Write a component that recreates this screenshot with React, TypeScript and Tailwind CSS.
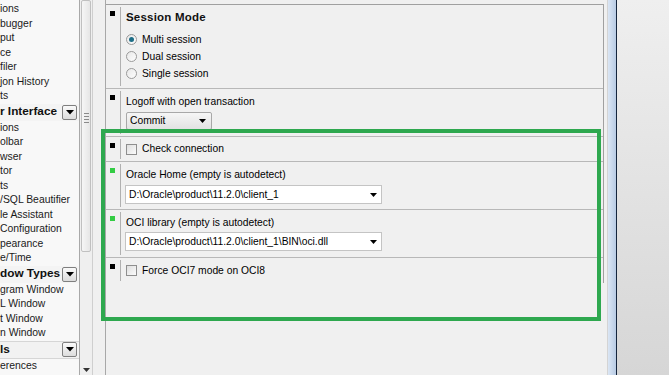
import React from "react";

const DropBtn = () => (
  <div className="w-[15px] h-[15px] border border-[#7f7f7f] rounded-[2px] bg-gradient-to-b from-[#fafafa] to-[#dcdcdc] flex items-center justify-center">
    <svg width="8" height="5" viewBox="0 0 8 5">
      <path d="M0 0 L8 0 L4 4.5 Z" fill="#000" />
    </svg>
  </div>
);

const Item = ({ t }: { t: string }) => (
  <div className="h-[14.5px] leading-[14.5px] whitespace-nowrap text-[10.4px] text-[#1a1a1a]">{t}</div>
);

const Header = ({ t, boxed }: { t: string; boxed?: boolean }) => (
  <div
    className={
      boxed
        ? "h-[18px] flex items-center justify-between pr-[2px] border-y border-[#d6d6d6] bg-[#f2f2f2]"
        : "h-[17px] flex items-center justify-between pr-[2px] bg-[#f4f4f4]"
    }
  >
    <span className="font-bold text-[11.8px] text-[#111] whitespace-nowrap">{t}</span>
    <DropBtn />
  </div>
);

const Sidebar = () => (
  <div className="w-[80px] h-full bg-[#f8f8f8] border-r border-[#a8a8a8] pt-[2px] overflow-hidden">
    {["ions", "bugger", "put", "ce", "filer", "jon History", "ts"].map((t) => (
      <Item key={t} t={t} />
    ))}
    <Header t="r Interface" />
    {["ions", "olbar", "wser", "tor", "ts", "/SQL Beautifier", "le Assistant", "Configuration", "pearance", "e/Time"].map((t) => (
      <Item key={t} t={t} />
    ))}
    <Header t="dow Types" />
    {["gram Window", "L Window", "t Window", "n Window"].map((t) => (
      <Item key={t} t={t} />
    ))}
    <Header t="ls" boxed />
    <Item t="erences" />
  </div>
);

const Scrollbar = () => (
  <div className="w-[13px] h-full bg-[#efefef] border-r border-[#cfcfcf] flex flex-col">
    <div className="h-[252px] mx-[1px] border border-[#c0c0c0] rounded-[2px] bg-gradient-to-r from-[#f6f6f6] to-[#e6e6e6] flex flex-col items-center pt-[112px] gap-[2px]">
      <div className="w-[5px] h-px bg-[#8a8a8a]" />
      <div className="w-[5px] h-px bg-[#8a8a8a]" />
      <div className="w-[5px] h-px bg-[#8a8a8a]" />
      <div className="w-[5px] h-px bg-[#8a8a8a]" />
    </div>
    <div className="flex-1" />
    <div className="h-[10px] flex items-center justify-center">
      <svg width="7" height="4" viewBox="0 0 7 4">
        <path d="M0 0 L7 0 L3.5 4 Z" fill="#333" />
      </svg>
    </div>
  </div>
);

const Marker = ({ green }: { green?: boolean }) => (
  <div className="w-[14px] shrink-0 flex">
    <div className={green ? "w-[5px] h-[5px] ml-[4px] mt-[6px] bg-[#33cc44]" : "w-[5px] h-[5px] ml-[4px] mt-[6px] bg-black"} />
  </div>
);

const Sep = () => <div className="w-px bg-[#b0b0b0] my-[2px] self-stretch shrink-0" />;

const Radio = ({ checked, label }: { checked?: boolean; label: string }) => (
  <div className="h-[17px] flex items-center gap-[5px]">
    <div className="w-[11px] h-[11px] rounded-full border border-[#9a9a9a] bg-gradient-to-br from-[#e8e8e8] to-[#fdfdfd] flex items-center justify-center">
      {checked && <div className="w-[5px] h-[5px] rounded-full bg-[#1d6d86]" />}
    </div>
    <span>{label}</span>
  </div>
);

const Check = ({ label }: { label: string }) => (
  <div className="flex items-center gap-[5px] h-full">
    <div className="w-[11px] h-[11px] border border-[#8e8e8e] bg-gradient-to-br from-[#dedede] to-[#fbfbfb]" />
    <span>{label}</span>
  </div>
);

const Arrow = () => (
  <svg width="7" height="4" viewBox="0 0 7 4">
    <path d="M0 0 L7 0 L3.5 4 Z" fill="#000" />
  </svg>
);

const Combo = ({ value }: { value: string }) => (
  <div className="w-[257px] h-[19px] border border-[#c4c4c4] bg-white flex items-center justify-between pl-[3px] pr-[4px]">
    <span>{value}</span>
    <Arrow />
  </div>
);

const Panel = () => (
  <div className="w-[503px] h-full border-l border-[#a8a8a8] border-r border-r-[#d4d4d4] pt-[4px] pr-[3px]">
    <div className="border-t border-r border-[#a0a0a0] text-[10.3px] text-black">
      <div className="h-[84px] border-b border-[#b8b8b8] flex">
        <Marker />
        <Sep />
        <div className="pl-[5px] pt-[5px]">
          <div className="h-[15px] leading-[15px] font-bold text-[11.5px] text-[#111] tracking-[0.2px]">Session Mode</div>
          <div className="mt-[6px]">
            <Radio checked label="Multi session" />
            <Radio label="Dual session" />
            <Radio label="Single session" />
          </div>
        </div>
      </div>
      <div className="h-[48px] border-b border-[#b8b8b8] flex">
        <Marker />
        <Sep />
        <div className="pl-[5px] pt-[7px]">
          <div className="h-[12px] leading-[12px]">Logoff with open transaction</div>
          <div className="mt-[4px] w-[86px] h-[18px] border border-[#a8a8a8] rounded-[2px] bg-gradient-to-b from-[#f6f6f6] to-[#e2e2e2] flex items-center justify-between pl-[3px] pr-[5px]">
            <span>Commit</span>
            <Arrow />
          </div>
        </div>
      </div>
      <div className="h-[25px] border-b border-[#b8b8b8] flex">
        <Marker />
        <Sep />
        <div className="pl-[5px]">
          <Check label="Check connection" />
        </div>
      </div>
      <div className="h-[48px] border-b border-[#b8b8b8] flex">
        <Marker green />
        <Sep />
        <div className="pl-[4px] pt-[7px]">
          <div className="h-[12px] leading-[12px] pl-[1px]">Oracle Home (empty is autodetect)</div>
          <div className="mt-[4px]">
            <Combo value="D:\Oracle\product\11.2.0\client_1" />
          </div>
        </div>
      </div>
      <div className="h-[48px] border-b border-[#b8b8b8] flex">
        <Marker green />
        <Sep />
        <div className="pl-[4px] pt-[7px]">
          <div className="h-[12px] leading-[12px] pl-[1px]">OCI library (empty is autodetect)</div>
          <div className="mt-[3px]">
            <Combo value="D:\Oracle\product\11.2.0\client_1\BIN\oci.dll" />
          </div>
        </div>
      </div>
      <div className="h-[25px] flex">
        <Marker />
        <Sep />
        <div className="pl-[5px]">
          <Check label="Force OCI7 mode on OCI8" />
        </div>
      </div>
    </div>
  </div>
);

export default function App() {
  return (
    <div className="bg-white w-[669px] h-[378px]">
      <div className="relative w-[669px] h-[375px] flex bg-[#f0f0f0] overflow-hidden font-['Liberation_Sans',Arial,sans-serif]">
        <Sidebar />
        <Scrollbar />
        <div className="w-[12px] h-full bg-[#f0f0f0]" />
        <Panel />
        <div className="w-[8px] h-full bg-gradient-to-r from-[#dbe6f4] to-[#b8cbe4]" />
        <div className="w-px h-full bg-[#14243c]" />
        <div className="flex-1 h-full bg-gradient-to-b from-[#efefef] to-[#d6d6d6]" />
        <div className="absolute left-[101px] top-[129px] w-[500px] h-[192px] border-4 border-[#2ea84f]" />
      </div>
    </div>
  );
}
